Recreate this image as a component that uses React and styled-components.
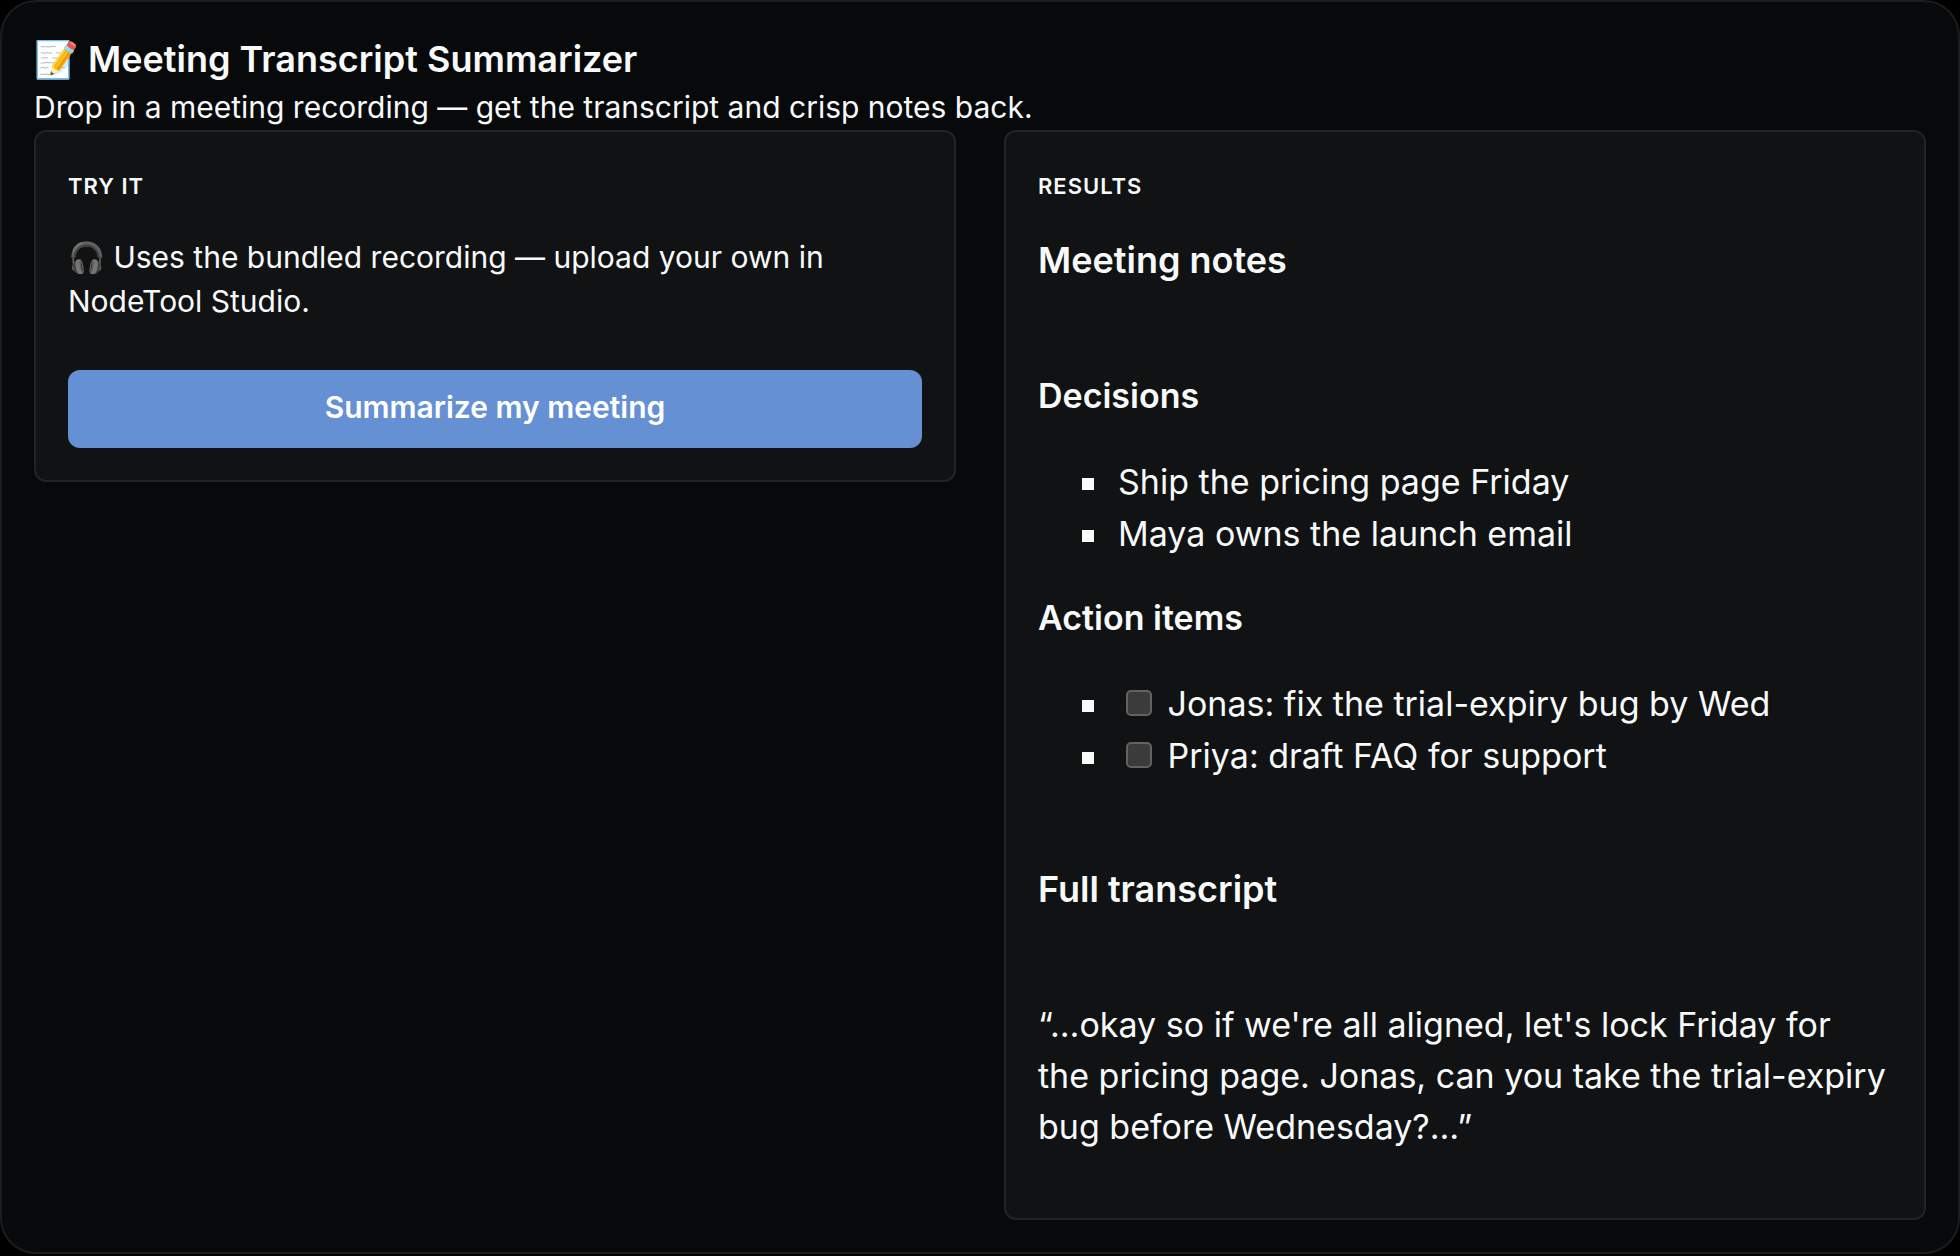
import React from 'react';
import styled, { createGlobalStyle } from 'styled-components';

const GlobalStyle = createGlobalStyle`
  * {
    box-sizing: border-box;
  }

  body {
    margin: 0;
    background: #000;
    color: #f8fafa;
    font-family: Inter, 'Liberation Sans', sans-serif;
    font-size: 30px;
    line-height: 45px;
  }

  h1, h2, h3, h4, p, ul {
    margin: 0;
    padding: 0;
  }
`;

const Shell = styled.main`
  min-height: calc(100vh - 2px);
  padding: 32px;
  background: #07090a;
  border: 2px solid #1b1c1d;
  border-radius: 36px;
`;

const Title = styled.h1`
  font-size: 36px;
  font-weight: 600;
  line-height: 51px;
`;

const Subtitle = styled.p`
  font-size: 30px;
`;

const Columns = styled.div`
  display: grid;
  grid-template-columns: 1fr 1fr;
  align-items: start;
  gap: 48px;
`;

const Card = styled.section`
  padding: 32px;
  background: #101213;
  border: 2px solid #222325;
  border-radius: 12px;
`;

const CardLabel = styled.h2`
  margin-bottom: 27px;
  font-size: 22px;
  font-weight: 600;
  line-height: 44px;
  letter-spacing: 1px;
  text-transform: uppercase;
`;

const Hint = styled.p`
  margin-bottom: 47px;
  line-height: 44px;
`;

const RunButton = styled.button`
  display: block;
  width: 100%;
  height: 78px;
  padding: 0 12px 4px;
  border: 0;
  border-radius: 12px;
  background: #6690d4;
  color: #fff;
  font-family: inherit;
  font-size: 30px;
  font-weight: 600;
  cursor: pointer;
`;

const Markdown = styled.div`
  font-size: 34px;
  line-height: 51px;
`;

const Heading = styled.h3`
  margin-bottom: 84px;
  font-size: 36px;
  font-weight: 600;
  line-height: 51px;
`;

const SubHeading = styled.h4`
  margin-bottom: 35px;
  font-size: 34px;
  font-weight: 600;
  line-height: 51px;
`;

const List = styled.ul`
  margin-bottom: ${props => (props.$last ? '82px' : '32px')};
  padding-left: 80px;
  list-style: none;
  line-height: 52px;
`;

const Item = styled.li`
  &::before {
    content: '';
    display: inline-block;
    width: 12px;
    height: 12px;
    margin: 0 24px 0 -36px;
    background: currentColor;
    vertical-align: 4px;
  }
`;

const Checkbox = styled.input`
  appearance: none;
  width: 26px;
  height: 26px;
  margin: 6px 6px 0 8px;
  background: #3b3b3b;
  border: 2px solid #626262;
  border-radius: 5px;
  vertical-align: baseline;
`;

const Transcript = styled.p`
  margin-bottom: 34px;
  padding-right: 4px;
`;

const decisions = ['Ship the pricing page Friday', 'Maya owns the launch email'];

const actionItems = [
  { id: 'jonas', text: 'Jonas: fix the trial-expiry bug by Wed' },
  { id: 'priya', text: 'Priya: draft FAQ for support' }
];

function App() {
  return (
    <Shell>
      <GlobalStyle />
      <Title>📝 Meeting Transcript Summarizer</Title>
      <Subtitle>Drop in a meeting recording — get the transcript and crisp notes back.</Subtitle>

      <Columns>
        <Card>
          <CardLabel>Try it</CardLabel>
          <Hint>🎧 Uses the bundled recording — upload your own in NodeTool Studio.</Hint>
          <RunButton type="button">Summarize my meeting</RunButton>
        </Card>

        <Card>
          <CardLabel>Results</CardLabel>
          <Markdown>
            <Heading>Meeting notes</Heading>

            <SubHeading>Decisions</SubHeading>
            <List>
              {decisions.map(decision => (
                <Item key={decision}>{decision}</Item>
              ))}
            </List>

            <SubHeading>Action items</SubHeading>
            <List $last>
              {actionItems.map(item => (
                <Item key={item.id}>
                  <Checkbox type="checkbox" id={item.id} />{' '}
                  <label htmlFor={item.id}>{item.text}</label>
                </Item>
              ))}
            </List>

            <Heading>Full transcript</Heading>
            <Transcript>
              “…okay so if we're all aligned, let's lock Friday for the pricing page. Jonas, can you
              take the trial-expiry bug before Wednesday?…”
            </Transcript>
          </Markdown>
        </Card>
      </Columns>
    </Shell>
  );
}

export default App;
